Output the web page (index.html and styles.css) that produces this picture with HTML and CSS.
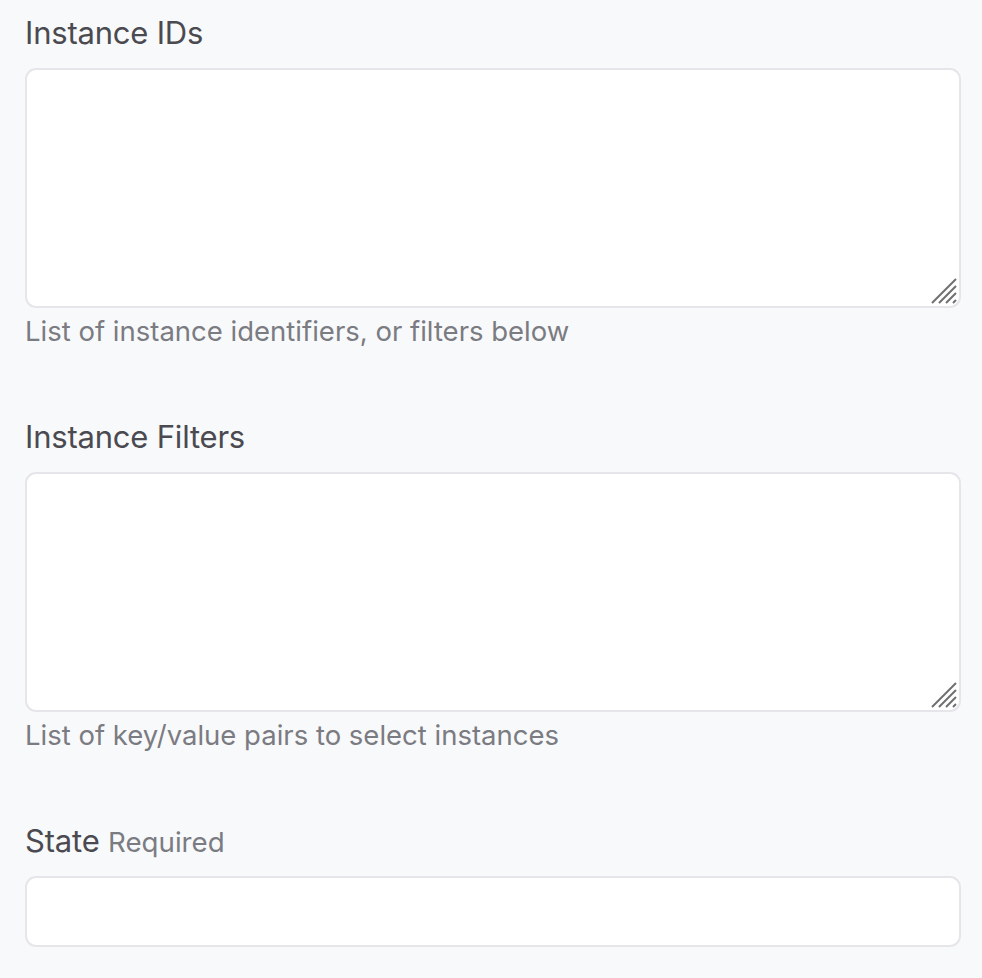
FILE: index.html
```html
<!DOCTYPE html>
<html lang="en">
<head>
<meta charset="utf-8">
<title>Form</title>
<link rel="stylesheet" href="styles.css">
</head>
<body>
<form class="form">
  <div class="field">
    <label class="label" for="ids">Instance IDs</label>
    <div class="ta-wrap">
      <textarea class="textarea" id="ids"></textarea>
      <svg class="grip" width="26" height="26" viewBox="0 0 26 26" aria-hidden="true">
        <path d="M1 25L25 1M8 25L25 8M15 25L25 15M22 25L25 22" stroke="#707070" stroke-width="2" fill="none"/>
      </svg>
    </div>
    <div class="hint">List of instance identifiers, or filters below</div>
  </div>
  <div class="field">
    <label class="label" for="filters">Instance Filters</label>
    <div class="ta-wrap">
      <textarea class="textarea" id="filters"></textarea>
      <svg class="grip" width="26" height="26" viewBox="0 0 26 26" aria-hidden="true">
        <path d="M1 25L25 1M8 25L25 8M15 25L25 15M22 25L25 22" stroke="#707070" stroke-width="2" fill="none"/>
      </svg>
    </div>
    <div class="hint">List of key/value pairs to select instances</div>
  </div>
  <div class="field">
    <label class="label" for="state">State <span class="req">Required</span></label>
    <input class="input" id="state" type="text">
  </div>
</form>
</body>
</html>
```
FILE: styles.css
```css
html, body {
  margin: 0;
  padding: 0;
  background: #f8f9fb;
}
body {
  font-family: Inter, "Noto Sans", "Liberation Sans", sans-serif;
  color: #4a4a50;
}
.form {
  display: flex;
  flex-direction: column;
  gap: 61px;
  padding: 9px 21px 0 25px;
}
.field {
  display: flex;
  flex-direction: column;
}
.label {
  display: block;
  font-size: 31px;
  line-height: 48px;
  letter-spacing: -0.2px;
  color: #4a4a50;
  margin-bottom: 11px;
}
.req {
  font-size: 27.7px;
  line-height: 1;
  letter-spacing: 0;
  color: #7b7b82;
}
.ta-wrap {
  position: relative;
}
.textarea, .input {
  display: block;
  box-sizing: border-box;
  width: 100%;
  margin: 0;
  background: #fff;
  border: 2px solid #e6e6ea;
  border-radius: 11px;
  font: inherit;
  outline: none;
}
.textarea {
  height: 240px;
  resize: none;
}
.grip {
  position: absolute;
  right: 4px;
  bottom: 4px;
  pointer-events: none;
}
.input {
  height: 71px;
}
.hint {
  font-size: 27.5px;
  line-height: 42px;
  color: #7b7b82;
  margin-top: 2px;
}
```
